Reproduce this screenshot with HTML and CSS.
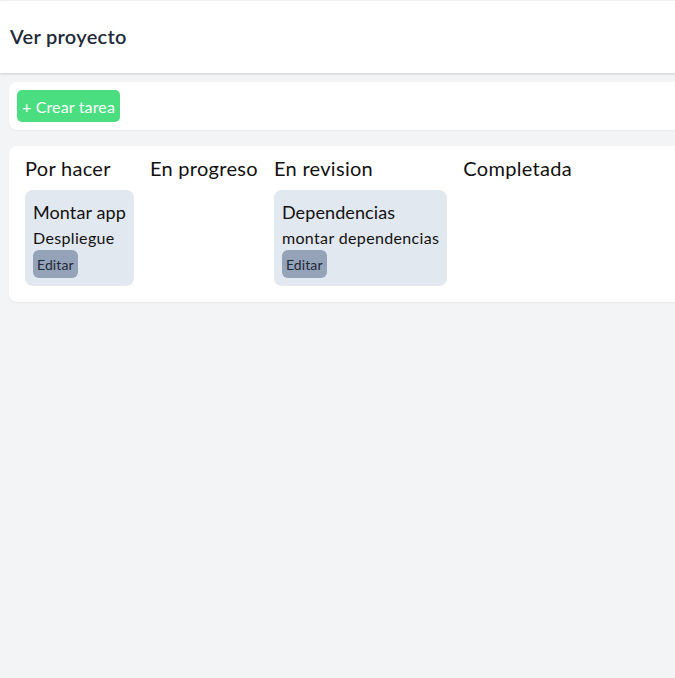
FILE: index.html
```html
<!DOCTYPE html>
<html lang="es">
<head>
<meta charset="utf-8">
<title>Ver proyecto</title>
<link rel="stylesheet" href="styles.css">
</head>
<body>
<header class="topbar">
  <h2 class="page-title">Ver proyecto</h2>
</header>
<main class="content">
  <section class="panel toolbar">
    <button class="btn-create">+ Crear tarea</button>
  </section>
  <section class="panel board">
    <div class="column">
      <h3 class="column-title">Por hacer</h3>
      <div class="task">
        <div class="task-title">Montar app</div>
        <div class="task-desc">Despliegue</div>
        <button class="btn-edit">Editar</button>
      </div>
    </div>
    <div class="column">
      <h3 class="column-title">En progreso</h3>
    </div>
    <div class="column">
      <h3 class="column-title">En revision</h3>
      <div class="task">
        <div class="task-title">Dependencias</div>
        <div class="task-desc">montar dependencias</div>
        <button class="btn-edit">Editar</button>
      </div>
    </div>
    <div class="column">
      <h3 class="column-title">Completada</h3>
    </div>
  </section>
</main>
</body>
</html>
```

FILE: styles.css
```css
* { box-sizing: border-box; }
html, body { margin: 0; padding: 0; }
body {
  background: #f3f4f6;
  font-family: Lato, "Noto Sans", sans-serif;
  color: #111827;
  overflow: hidden;
  min-height: 678px;
}
.topbar {
  margin-top: 1px;
  height: 72px;
  background: #fff;
  box-shadow: 0 1px 3px rgba(0,0,0,0.1), 0 1px 2px rgba(0,0,0,0.06);
  display: flex;
  align-items: center;
  padding-left: 10px;
  width: 760px;
}
.page-title {
  margin: 0 0 2px;
  font-size: 20px;
  font-weight: 600;
  color: #1f2937;
  line-height: 28px;
  letter-spacing: 0.3px;
}
.content {
  padding: 9px 0 0 9px;
  display: flex;
  flex-direction: column;
  gap: 16px;
}
.panel {
  background: #fff;
  border-radius: 8px;
  width: 760px;
  box-shadow: 0 1px 2px rgba(0,0,0,0.05);
}
.toolbar {
  padding: 8px;
  display: flex;
}
.btn-create {
  height: 32px;
  background: #4ade80;
  color: #fff;
  border: 0;
  border-radius: 5px;
  font: inherit;
  font-size: 16px;
  padding: 0 5px;
  white-space: nowrap;
  letter-spacing: 0.15px;
}
.board {
  padding: 0 8px 8px;
  display: flex;
  align-items: flex-start;
}
.column {
  padding: 8px;
  display: flex;
  flex-direction: column;
  gap: 8px;
}
.column-title {
  margin: 0;
  font-size: 20px;
  font-weight: 400;
  line-height: 28px;
  color: #111;
  white-space: nowrap;
  letter-spacing: 0.3px;
}
.task {
  background: #e2e8f0;
  border-radius: 8px;
  padding: 8px;
  display: flex;
  flex-direction: column;
  align-items: flex-start;
}
.task-title {
  font-size: 18px;
  line-height: 28px;
  color: #111;
  letter-spacing: 0.1px;
}
.task-desc {
  font-size: 16px;
  line-height: 24px;
  color: #111;
  letter-spacing: 0.35px;
}
.btn-edit {
  height: 28px;
  background: #94a3b8;
  color: #1f2937;
  border: 0;
  border-radius: 6px;
  font: inherit;
  font-size: 14px;
  padding: 0 4px;
  letter-spacing: 0.1px;
}
```
